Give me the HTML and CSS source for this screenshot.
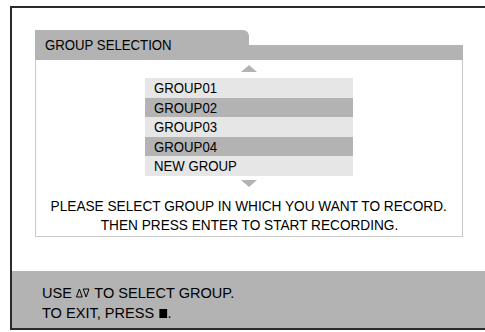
FILE: index.html
```html
<!DOCTYPE html>
<html>
<head>
<meta charset="utf-8">
<link rel="stylesheet" href="styles.css">
</head>
<body>
<div class="screen">
  <div class="panel">
    <div class="panel-head">
      <div class="tab"><span class="cx">GROUP SELECTION</span></div>
      <div class="tab-rest"></div>
    </div>
    <div class="panel-body">
      <svg class="arrow arrow-up" width="16" height="7" viewBox="0 0 16 7"><polygon points="8,0 16,7 0,7" fill="#b3b3b3"/></svg>
      <ul class="list">
        <li class="row light"><span class="cx">GROUP01</span></li>
        <li class="row dark"><span class="cx">GROUP02</span></li>
        <li class="row light"><span class="cx">GROUP03</span></li>
        <li class="row dark"><span class="cx">GROUP04</span></li>
        <li class="row light"><span class="cx">NEW GROUP</span></li>
      </ul>
      <svg class="arrow arrow-down" width="16" height="7" viewBox="0 0 16 7"><polygon points="0,0 16,0 8,7" fill="#b3b3b3"/></svg>
      <div class="msg">
        <span class="mline">PLEASE SELECT GROUP IN WHICH YOU WANT TO RECORD.</span>
        <span class="mline">THEN PRESS ENTER TO START RECORDING.</span>
      </div>
    </div>
  </div>
  <div class="footer">
    <span class="fline">USE <svg class="tri" width="14" height="10" viewBox="0 0 14 10"><polygon points="3.5,1 6.5,9 0.5,9" fill="none" stroke="#000" stroke-width="1"/><polygon points="7.5,1 13.5,1 10.5,9" fill="none" stroke="#000" stroke-width="1"/></svg> TO SELECT GROUP.</span>
    <span class="fline">TO EXIT, PRESS <span class="stop"></span>.</span>
  </div>
</div>
</body>
</html>
```
FILE: styles.css
```css
html, body {
  margin: 0;
  padding: 0;
  background: #fff;
  overflow: hidden;
  width: 485px;
  height: 332px;
}
body {
  font-family: "Liberation Sans", Arial, sans-serif;
  color: #000;
  font-size: 15px;
}
.screen {
  margin: 6px 0 0 10px;
  width: 480px;
  height: 320px;
  border-left: 2px solid #2a2a2a;
  border-top: 2px solid #2a2a2a;
  border-bottom: 2px solid #2a2a2a;
  display: flex;
  flex-direction: column;
}
.cx {
  display: inline-block;
  transform: scaleX(0.88);
  transform-origin: left center;
  white-space: nowrap;
}
.panel {
  margin: 22px 0 0 23px;
  width: 428px;
  display: flex;
  flex-direction: column;
}
.panel-head {
  display: flex;
  height: 30px;
}
.tab {
  width: 204px;
  padding-left: 10px;
  background: #b3b3b3;
  border-top-right-radius: 6px;
  line-height: 30px;
}
.tab-rest {
  flex: 1;
  align-self: flex-end;
  height: 15px;
  background: #b3b3b3;
}
.panel-body {
  border: 1px solid #c8c8c8;
  border-top: none;
  display: flex;
  flex-direction: column;
  align-items: center;
  padding: 5px 0 2px;
}
.arrow {
  display: block;
}
.list {
  list-style: none;
  margin: 6px 0 0;
  padding: 0;
  width: 208px;
}
.row {
  height: 19.6px;
  line-height: 19.6px;
  padding-left: 9px;
}
.light { background: #e6e6e6; }
.dark { background: #b3b3b3; }
.arrow-down {
  margin-top: 4px;
}
.msg {
  margin: 9px 0 0;
  display: flex;
  flex-direction: column;
  align-items: center;
  line-height: 19px;
}
.mline {
  display: block;
  white-space: nowrap;
  transform: scaleX(0.91);
  transform-origin: center;
}
.footer {
  margin-top: 34px;
  flex: 1;
  background: #b3b3b3;
  padding: 12px 0 0 30px;
  display: flex;
  flex-direction: column;
  align-items: flex-start;
}
.fline {
  line-height: 20px;
  display: flex;
  align-items: baseline;
  white-space: pre;
  transform: scaleX(0.97);
  transform-origin: left center;
}
.tri {
  align-self: center;
  margin: 0 1px 0 0;
}
.stop {
  display: inline-block;
  width: 8.5px;
  height: 8.5px;
  background: #000;
  margin-left: 1px;
}
```
